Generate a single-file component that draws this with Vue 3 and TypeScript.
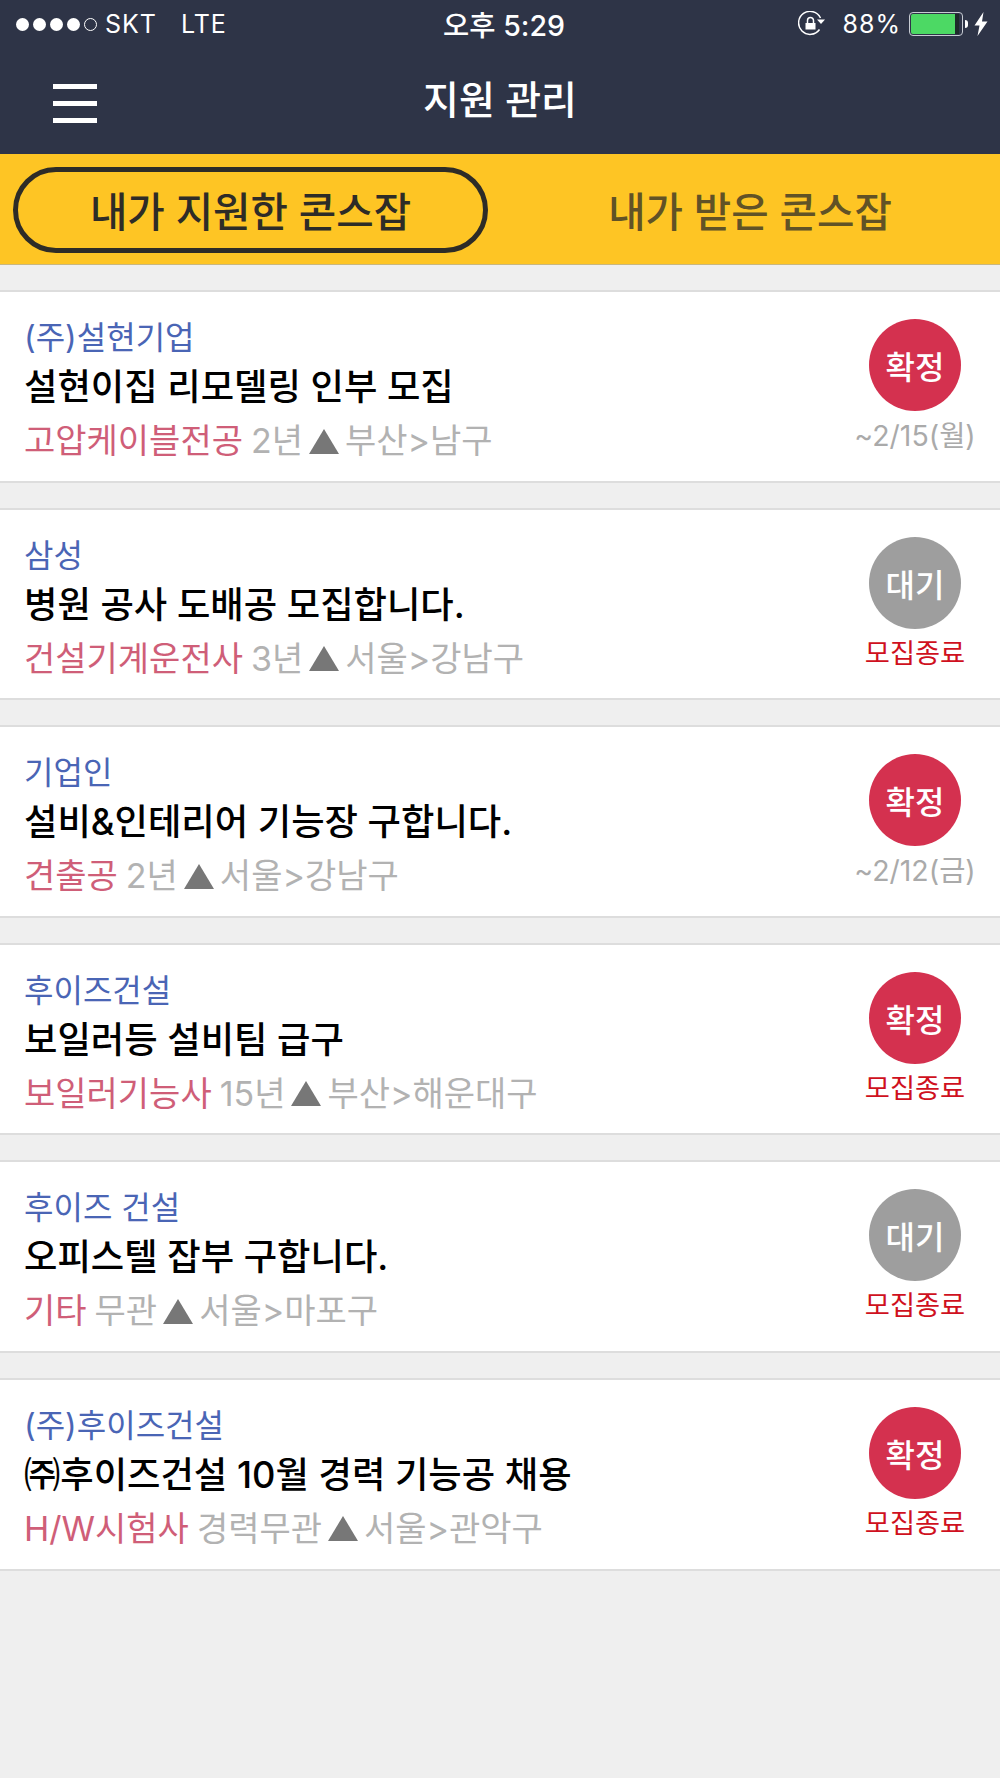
<script setup lang="ts">
interface Job {
  company: string
  title: string
  trade: string
  career: string
  area: string
  status: string
  deadline: string
}

const jobs: Job[] = [
  { company: '(주)설현기업', title: '설현이집 리모델링 인부 모집', trade: '고압케이블전공', career: '2년', area: '부산>남구', status: '확정', deadline: '~2/15(월)' },
  { company: '삼성', title: '병원 공사 도배공 모집합니다.', trade: '건설기계운전사', career: '3년', area: '서울>강남구', status: '대기', deadline: '모집종료' },
  { company: '기업인', title: '설비&인테리어 기능장 구합니다.', trade: '견출공', career: '2년', area: '서울>강남구', status: '확정', deadline: '~2/12(금)' },
  { company: '후이즈건설', title: '보일러등 설비팀 급구', trade: '보일러기능사', career: '15년', area: '부산>해운대구', status: '확정', deadline: '모집종료' },
  { company: '후이즈 건설', title: '오피스텔 잡부 구합니다.', trade: '기타', career: '무관', area: '서울>마포구', status: '대기', deadline: '모집종료' },
  { company: '(주)후이즈건설', title: '㈜후이즈건설 10월 경력 기능공 채용', trade: 'H/W시험사', career: '경력무관', area: '서울>관악구', status: '확정', deadline: '모집종료' },
]
</script>

<template>
  <div class="screen">
    <header class="top">
      <div class="status-bar">
        <div class="status-left">
          <span class="signal">
            <i v-for="n in 4" :key="n" class="dot" />
            <i class="dot dot-empty" />
          </span>
          <span class="carrier">SKT</span>
          <span class="carrier">LTE</span>
        </div>
        <div class="clock">오후 5:29</div>
        <div class="status-right">
          <svg class="lock" width="28" height="26" viewBox="0 0 28 26">
            <path d="M21.5 18.5A11.5 11.5 0 1 1 22.5 7" fill="none" stroke="#fff" stroke-width="1.5" />
            <path d="M19 8.5h8l-4 4.5z" fill="#fff" />
            <path d="M7.5 12h10v6.5h-10z" fill="#fff" />
            <path d="M9.5 12V9.5a3 3 0 0 1 6 0V12" fill="none" stroke="#fff" stroke-width="1.5" />
          </svg>
          <span class="percent">88%</span>
          <span class="battery"><span class="battery-fill" /></span>
          <span class="battery-tip" />
          <svg class="bolt" width="14" height="24" viewBox="0 0 14 24">
            <path d="M9.5 0 0.5 13.5h5L3.5 24 13.5 9.5h-5.5z" fill="#fff" />
          </svg>
        </div>
      </div>
      <nav class="nav">
        <div class="burger"><i /><i /><i /></div>
        <h1 class="nav-title">지원 관리</h1>
      </nav>
    </header>

    <div class="tabs">
      <div class="tab tab-active">내가 지원한 콘스잡</div>
      <div class="tab">내가 받은 콘스잡</div>
    </div>

    <main class="list">
      <article v-for="job in jobs" :key="job.title" class="card">
        <div class="info">
          <div class="company">{{ job.company }}</div>
          <div class="title">{{ job.title }}</div>
          <div class="meta">
            <span class="trade">{{ job.trade }}</span>
            <span class="career">{{ job.career }}</span>
            <span class="tri" />
            <span>{{ job.area }}</span>
          </div>
        </div>
        <div class="side">
          <div class="badge" :class="job.status === '대기' ? 'badge-wait' : 'badge-ok'">{{ job.status }}</div>
          <div class="deadline" :class="{ closed: job.deadline === '모집종료' }">{{ job.deadline }}</div>
        </div>
      </article>
    </main>
  </div>
</template>

<style>
html,
body {
  margin: 0;
  background: #efefef;
}
</style>

<style scoped>
.screen {
  width: 1000px;
  height: 1778px;
  overflow: hidden;
  background: #efefef;
  font-family: Inter, "Noto Sans CJK KR", sans-serif;
}

.top {
  height: 154px;
  background: #2e3447;
  color: #fff;
}

.status-bar {
  display: grid;
  grid-template-columns: 1fr auto 1fr;
  align-items: center;
  height: 48px;
  padding: 0 12px 0 16px;
}

.status-left,
.status-right {
  display: flex;
  align-items: center;
}

.status-right {
  justify-content: flex-end;
}

.signal {
  display: flex;
  gap: 4px;
  margin-right: 8px;
}

.dot {
  width: 13px;
  height: 13px;
  border-radius: 50%;
  background: #fff;
}

.dot-empty {
  box-sizing: border-box;
  background: none;
  border: 1px solid #fff;
}

.carrier {
  font-size: 25px;
  margin-right: 24px;
  letter-spacing: 1px;
}

.clock {
  margin: -2px 0 0 4px;
  font-size: 28.5px;
  font-weight: 500;
}

.lock {
  margin-right: 17px;
}

.percent {
  font-size: 25px;
  margin-right: 8px;
  letter-spacing: 1px;
}

.battery {
  box-sizing: border-box;
  display: block;
  width: 54px;
  height: 24px;
  padding: 1px;
  border: 1px solid #c8ccd4;
  border-radius: 4px;
}

.battery-fill {
  display: block;
  width: 44px;
  height: 100%;
  background: #4cd964;
  border-radius: 2px 0 0 2px;
  border-right: 4px solid #1d2a2a;
}

.battery-tip {
  width: 3px;
  height: 8px;
  margin-left: 2px;
  margin-right: 6px;
  background: #fff;
  border-radius: 0 3px 3px 0;
}

.nav {
  position: relative;
  display: flex;
  align-items: center;
  justify-content: center;
  height: 106px;
}

.burger {
  position: absolute;
  left: 53px;
  top: 36px;
  display: flex;
  flex-direction: column;
  gap: 12px;
  width: 44px;
}

.burger i {
  display: block;
  height: 5px;
  background: #fff;
}

.nav-title {
  margin: 0 0 3px;
  font-size: 39px;
  font-weight: 500;
  line-height: 1;
}

.tabs {
  box-sizing: border-box;
  display: grid;
  grid-template-columns: 1fr 1fr;
  align-items: center;
  height: 111px;
  padding-top: 2px;
  background: #fec524;
  border-bottom: 1px solid #c9b77f;
}

.tab {
  box-sizing: border-box;
  height: 86px;
  padding-bottom: 2px;
  display: flex;
  align-items: center;
  justify-content: center;
  font-size: 40.7px;
  font-weight: 500;
  color: #615226;
  border: 5px solid transparent;
  border-radius: 43px;
}

.tab-active {
  margin: 0 12px 0 13px;
  color: #2e2c27;
  border-color: #2e2c27;
}

.list {
  display: flex;
  flex-direction: column;
  gap: 25px;
  padding-top: 25px;
}

.card {
  box-sizing: border-box;
  display: flex;
  justify-content: space-between;
  height: 192.6px;
  padding: 0 25px 0 24px;
  background: #fff;
  border-top: 2px solid #dddddd;
  border-bottom: 2px solid #dddddd;
}

.info {
  padding-top: 24px;
}

.company {
  font-size: 32px;
  line-height: 44px;
  color: #4a65b5;
}

.title {
  margin-top: 1px;
  font-size: 36.3px;
  font-weight: 500;
  line-height: 52px;
  color: #000;
}

.meta {
  display: flex;
  align-items: center;
  gap: 6px;
  margin-top: 2px;
  font-size: 34px;
  line-height: 52px;
  color: #b2b2b2;
}

.career {
  margin-left: 2px;
}

.trade {
  color: #cf5e78;
}

.tri {
  width: 0;
  height: 0;
  border-left: 15px solid transparent;
  border-right: 15px solid transparent;
  border-bottom: 25px solid #777;
}

.side {
  width: 120px;
  display: flex;
  flex-direction: column;
  align-items: center;
  padding-top: 27px;
}

.badge {
  width: 92px;
  height: 92px;
  border-radius: 50%;
  display: flex;
  align-items: center;
  justify-content: center;
  color: #fff;
  font-size: 32px;
  font-weight: 500;
}

.badge-ok {
  background: #d4314f;
}

.badge-wait {
  background: #9e9e9e;
}

.deadline {
  margin-top: 5px;
  font-size: 28.5px;
  line-height: 40px;
  color: #aaa;
  white-space: nowrap;
}

.closed {
  font-size: 27.3px;
  color: #cf1020;
}
</style>
